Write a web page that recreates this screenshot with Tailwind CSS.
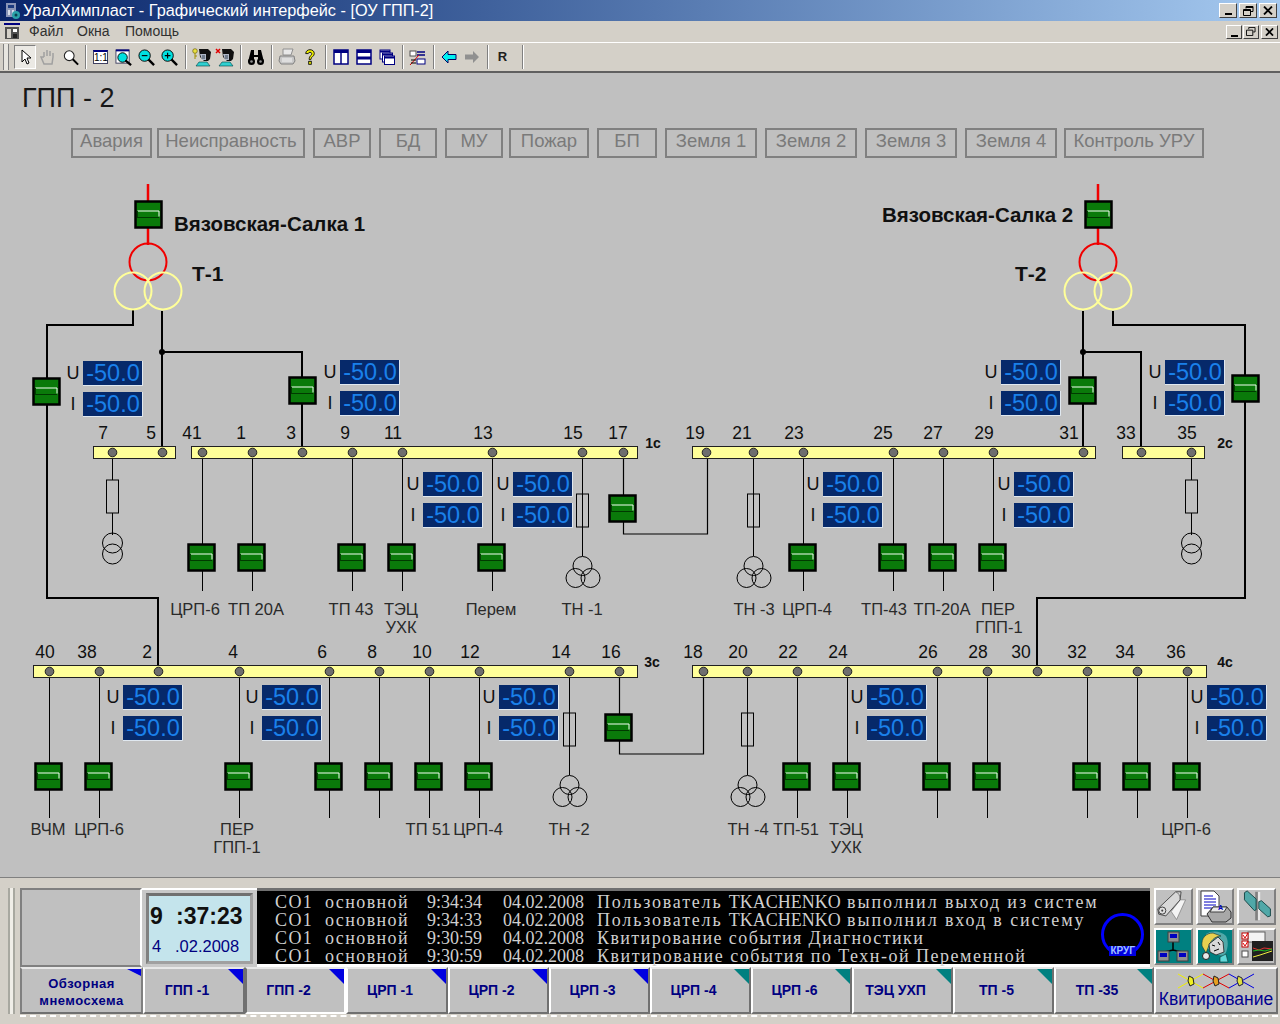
<!DOCTYPE html>
<html lang="ru">
<head>
<meta charset="UTF-8">
<title>ОУ ГПП-2</title>
<script src="https://cdn.jsdelivr.net/npm/@tailwindcss/browser@4"></script>
</head>
<body class="bg-[#d4d0c8]">
<div class="w-[1280px] h-[1024px] flex flex-col overflow-hidden bg-[#d4d0c8] font-['Liberation_Sans',sans-serif]">

  <!-- title bar -->
  <div class="h-[21px] flex items-center bg-linear-to-r from-[#0a246a] to-[#a6caf0] pl-[3px] pr-[3px]">
    <svg class="w-[18px] h-[18px] mr-[2px]" viewBox="0 0 18 18"><rect x="3" y="1" width="10" height="14" fill="#8a94b8"/><rect x="5" y="3" width="6" height="3" fill="#1c3a80"/><rect x="5" y="8" width="2" height="5" fill="#d8dcea"/><rect x="9" y="8" width="2" height="5" fill="#d8dcea"/><circle cx="13" cy="13" r="4" fill="#2aa0a8"/><circle cx="13" cy="13" r="1.5" fill="#0a4050"/></svg>
    <span class="text-white text-[16.3px] leading-none">УралХимпласт - Графический интерфейс - [ОУ ГПП-2]</span>
    <div class="ml-auto flex">
      <div class="w-[18px] h-[15px] bg-[#d4d0c8] border border-t-white border-l-white border-r-[#404040] border-b-[#404040] flex items-end justify-center pb-[2px]"><div class="w-[7px] h-[2px] bg-black"></div></div>
      <div class="w-[18px] h-[15px] ml-[2px] bg-[#d4d0c8] border border-t-white border-l-white border-r-[#404040] border-b-[#404040] flex items-center justify-center"><svg class="w-[11px] h-[10px]" viewBox="0 0 11 10" fill="none" stroke="#000"><path d="M3 2.5V.5h7v5H8"/><path d="M3 1.5h7"/><path d="M.5 3.5h7v6h-7z"/><path d="M.5 4.5h7"/></svg></div>
      <div class="w-[18px] h-[15px] ml-[2px] bg-[#d4d0c8] border border-t-white border-l-white border-r-[#404040] border-b-[#404040] flex items-center justify-center"><svg class="w-[10px] h-[9px]" viewBox="0 0 10 9" stroke="#000" stroke-width="1.8"><path d="M1 .5l8 8M9 .5l-8 8"/></svg></div>
    </div>
  </div>

  <!-- menu -->
  <div class="h-[22px] flex items-center border-b border-b-white relative pl-[4px] pr-[2px]">
    <svg class="w-[17px] h-[17px] mr-[8px]" viewBox="0 0 17 17"><rect x="0" y="0" width="16" height="2" fill="#000080"/><rect x="1" y="4" width="14" height="12" fill="#505050"/><rect x="3" y="6" width="4" height="9" fill="#d4d0c8"/><rect x="9" y="6" width="4" height="3" fill="#fff"/><rect x="9" y="11" width="4" height="4" fill="#202020"/></svg>
    <span class="text-[14px] text-[#303030] w-[48px]">Файл</span>
    <span class="text-[14px] text-[#303030] w-[48px]">Окна</span>
    <span class="text-[14px] text-[#303030]">Помощь</span>
    <div class="ml-auto flex">
      <div class="w-[16px] h-[14px] bg-[#d4d0c8] border border-t-white border-l-white border-r-[#404040] border-b-[#404040] flex items-end justify-center pb-[1px]"><div class="w-[7px] h-[2px] bg-black"></div></div>
      <div class="w-[16px] h-[14px] ml-[1px] bg-[#d4d0c8] border border-t-white border-l-white border-r-[#404040] border-b-[#404040] flex items-center justify-center"><svg class="w-[10px] h-[9px]" viewBox="0 0 11 10" fill="none" stroke="#000"><path d="M3 2.5V.5h7v5H8"/><path d="M.5 3.5h7v6h-7z"/></svg></div>
      <div class="w-[17px] h-[14px] ml-[2px] bg-[#d4d0c8] border border-t-white border-l-white border-r-[#404040] border-b-[#404040] flex items-center justify-center"><svg class="w-[9px] h-[8px]" viewBox="0 0 10 9" stroke="#000" stroke-width="2"><path d="M1 .5l8 8M9 .5l-8 8"/></svg></div>
    </div>
  </div>

  <!-- toolbar -->
  <div class="h-[30px] flex items-center pl-[3px] border-b-2 border-b-[#606060]">
    <div class="w-[6px] h-[26px] border-x border-x-[#808080] bg-[#e8e6e0] mr-[5px]"></div>
    <div class="w-[22px] h-[24px] flex items-center justify-center border border-t-[#808080] border-l-[#808080] border-r-white border-b-white bg-[#ebe9e4]"><svg class="w-[16px] h-[16px]" viewBox="0 0 16 16"><path d="M5 1v12l3-3 2 5 2-1-2-5h4z" fill="#fff" stroke="#000"/></svg></div>
    <div class="w-[23px] flex justify-center"><svg class="w-[18px] h-[18px]" viewBox="0 0 18 18"><path d="M5 9V4M8 8V2M11 8V3M14 9V5M5 9l-3 0 3 7h8l1-7" fill="#d4d0c8" stroke="#a0a0a0" stroke-width="1.5"/></svg></div>
    <div class="w-[23px] flex justify-center"><svg class="w-[16px] h-[17px]" viewBox="0 0 18 18"><circle cx="7" cy="7" r="5.5" fill="#fff" stroke="#202020" stroke-width="1.2"/><path d="M11 11l6 6" stroke="#000" stroke-width="2.2"/></svg></div>
    <div class="w-px h-[24px] bg-[#808080] border-r border-r-white ml-[3px] mr-[2px] box-content"></div>
    <div class="w-[23px] flex justify-center"><div class="w-[15px] h-[14px] border border-[#404060] border-t-2 border-t-[#000080] bg-white text-[10px] leading-[11px] text-center text-black">1:1</div></div>
    <div class="w-[23px] flex justify-center"><svg class="w-[17px] h-[17px]" viewBox="0 0 18 18"><rect x="1" y="1" width="14" height="14" fill="#fff" stroke="#404060"/><path d="M1 1.5h14" stroke="#000080" stroke-width="2"/><circle cx="8" cy="9" r="5" fill="#00e0e0" stroke="#000"/><path d="M11 12l6 5" stroke="#000" stroke-width="2.5"/></svg></div>
    <div class="w-[23px] flex justify-center"><svg class="w-[17px] h-[17px]" viewBox="0 0 18 18"><circle cx="7" cy="7" r="6" fill="#00e0e0" stroke="#000"/><path d="M4 7h6" stroke="#000" stroke-width="1.2"/><path d="M11 11l6 6" stroke="#000" stroke-width="2.5"/></svg></div>
    <div class="w-[23px] flex justify-center"><svg class="w-[17px] h-[17px]" viewBox="0 0 18 18"><circle cx="7" cy="7" r="6" fill="#00e0e0" stroke="#000"/><path d="M4 7h6M7 4v6" stroke="#000" stroke-width="1.2"/><path d="M11 11l6 6" stroke="#000" stroke-width="2.5"/></svg></div>
    <div class="w-px h-[24px] bg-[#808080] border-r border-r-white ml-[4px] mr-[3px] box-content"></div>
    <div class="w-[23px] flex justify-center"><svg class="w-[20px] h-[20px]" viewBox="0 0 20 20"><circle cx="3" cy="4" r="2.300" fill="#e8e040" stroke="#605000" stroke-width=".6"/><path d="M3 6v6M3 9h2" stroke="#a09000"/><path d="M7 2h9l3 3-1 7-2 2h-4l-4-4z" fill="#101010"/><path d="M8 7h6v6H10z" fill="#b0b8c8"/><path d="M10 9h3M10 11h3" stroke="#304050"/><path d="M4 19l3-4h8l3 4z" fill="#30d0d0" stroke="#004040" stroke-width=".6"/></svg></div>
    <div class="w-[23px] flex justify-center"><svg class="w-[20px] h-[20px]" viewBox="0 0 20 20"><path d="M1 2l4 4M5 2l-4 4" stroke="#e00000" stroke-width="1.5"/><path d="M7 2h9l3 3-1 7-2 2h-4l-4-4z" fill="#101010"/><path d="M8 7h6v6H10z" fill="#b0b8c8"/><path d="M10 9h3M10 11h3" stroke="#304050"/><path d="M4 19l3-4h8l3 4z" fill="#30d0d0" stroke="#004040" stroke-width=".6"/></svg></div>
    <div class="w-px h-[24px] bg-[#808080] border-r border-r-white ml-[4px] mr-[2px] box-content"></div>
    <div class="w-[23px] flex justify-center"><svg class="w-[18px] h-[16px]" viewBox="0 0 18 16"><path d="M4 1h3v5h4V1h3l3 12h-6V8H7v5H1z" fill="#000"/><circle cx="4.500" cy="12.500" r="3.500" fill="#000"/><circle cx="13.500" cy="12.500" r="3.500" fill="#000"/><circle cx="4.500" cy="12.500" r="1.300" fill="#909090"/><circle cx="13.500" cy="12.500" r="1.300" fill="#909090"/></svg></div>
    <div class="w-px h-[24px] bg-[#808080] border-r border-r-white ml-[4px] mr-[2px] box-content"></div>
    <div class="w-[23px] flex justify-center"><svg class="w-[18px] h-[18px]" viewBox="0 0 18 18"><path d="M5 1h10l-2 6H5z" fill="#e8e8e8" stroke="#909090"/><path d="M2 8h14l1 5-2 3H3l-2-3z" fill="#c8c8c8" stroke="#808080"/><path d="M4 11h10M4 13h10" stroke="#f4f4f4"/></svg></div>
    <div class="w-[23px] flex justify-center"><svg class="w-[12px] h-[18px]" viewBox="0 0 14 20"><path d="M2 6c0-6 10-6 10 0 0 4-4 3-4 7H6c0-5 3-4 3-7 0-2-4-2-4 0z" fill="#f0f000" stroke="#000"/><rect x="5.500" y="15" width="3" height="3.500" fill="#f0f000" stroke="#000"/></svg></div>
    <div class="w-px h-[24px] bg-[#808080] border-r border-r-white ml-[4px] mr-[2px] box-content"></div>
    <div class="w-[23px] flex justify-center"><svg class="w-[16px] h-[16px]" viewBox="0 0 16 16"><rect x="1" y="1" width="14" height="14" fill="#fff" stroke="#000080" stroke-width="1.500"/><path d="M1 2.500h14" stroke="#000080" stroke-width="3"/><path d="M8 1v14" stroke="#000080" stroke-width="1.500"/></svg></div>
    <div class="w-[23px] flex justify-center"><svg class="w-[16px] h-[16px]" viewBox="0 0 16 16"><rect x="1" y="1" width="14" height="14" fill="#fff" stroke="#000080" stroke-width="1.500"/><path d="M1 2.500h14M1 9h14" stroke="#000080" stroke-width="3"/></svg></div>
    <div class="w-[23px] flex justify-center"><svg class="w-[16px] h-[16px]" viewBox="0 0 16 16"><rect x="1" y="1" width="10" height="9" fill="#fff" stroke="#000080"/><path d="M1 2.500h10" stroke="#000080" stroke-width="2"/><rect x="3.500" y="4" width="10" height="9" fill="#fff" stroke="#000080"/><path d="M3.500 5.500h10" stroke="#000080" stroke-width="2"/><rect x="5.500" y="7" width="10" height="8.500" fill="#fff" stroke="#000080"/><path d="M5.500 8.500h10" stroke="#000080" stroke-width="2"/></svg></div>
    <div class="w-px h-[24px] bg-[#808080] border-r border-r-white ml-[4px] mr-[2px] box-content"></div>
    <div class="w-[23px] flex justify-center"><svg class="w-[17px] h-[17px]" viewBox="0 0 17 17"><rect x="1" y="2" width="6" height="5" fill="#fff" stroke="#505050"/><path d="M8 3h8M8 6h8" stroke="#000080" stroke-width="1.500"/><path d="M1 16l9-10" stroke="#e00000"/><rect x="8" y="10" width="8" height="5" fill="#fff" stroke="#000080"/><path d="M2 11h5M2 14h5" stroke="#000"/></svg></div>
    <div class="w-px h-[24px] bg-[#808080] border-r border-r-white ml-[4px] mr-[2px] box-content"></div>
    <div class="w-[23px] flex justify-center"><svg class="w-[16px] h-[14px]" viewBox="0 0 16 14"><path d="M7 1L1 7l6 6V9.500h8v-5H7z" fill="#00f0f0" stroke="#000060"/></svg></div>
    <div class="w-[23px] flex justify-center"><svg class="w-[16px] h-[14px]" viewBox="0 0 16 14"><path d="M9 1l6 6-6 6V9.500H1v-5h8z" fill="#909090"/></svg></div>
    <div class="w-px h-[24px] bg-[#808080] border-r border-r-white ml-[4px] mr-[2px] box-content"></div>
    <div class="w-[23px] text-center text-[13px] font-bold text-[#202020]">R</div>
    <div class="w-px h-[24px] bg-[#808080] border-r border-r-white ml-[8px] box-content"></div>
  </div>

  <!-- mimic diagram -->
  <div class="h-[805px] relative bg-[#c0c0c0] border-b border-b-[#808080]">
    <div class="pl-[22px] pt-[9px] h-[55px] text-[27px] leading-[32px] text-[#181818]">ГПП - 2</div>
    <div class="flex pl-[71px] text-[18.5px] text-[#7a7a7a] leading-[22px] text-center">
      <div class="w-[81px] h-[30px] border-2 border-[#808080] mr-[5px]">Авария</div>
      <div class="w-[148px] h-[30px] border-2 border-[#808080] mr-[8px]">Неисправность</div>
      <div class="w-[58px] h-[30px] border-2 border-[#808080] mr-[8px]">АВР</div>
      <div class="w-[58px] h-[30px] border-2 border-[#808080] mr-[8px]">БД</div>
      <div class="w-[58px] h-[30px] border-2 border-[#808080] mr-[6px]">МУ</div>
      <div class="w-[80px] h-[30px] border-2 border-[#808080] mr-[8px]">Пожар</div>
      <div class="w-[60px] h-[30px] border-2 border-[#808080] mr-[8px]">БП</div>
      <div class="w-[92px] h-[30px] border-2 border-[#808080] mr-[8px]">Земля 1</div>
      <div class="w-[92px] h-[30px] border-2 border-[#808080] mr-[8px]">Земля 2</div>
      <div class="w-[92px] h-[30px] border-2 border-[#808080] mr-[8px]">Земля 3</div>
      <div class="w-[92px] h-[30px] border-2 border-[#808080] mr-[7px]">Земля 4</div>
      <div class="w-[140px] h-[30px] border-2 border-[#808080]">Контроль УРУ</div>
    </div>
    <svg id="scheme" class="absolute left-0 top-0 w-[1280px] h-[805px]" viewBox="0 73 1280 805"></svg>
  </div>

  <!-- bottom panel -->
  <div class="flex-1 flex pl-[8px] pt-[10px]">
    <div class="w-[7px] h-[126px] border-x-2 border-x-[#a8a8a0] bg-[#f0eee8] mr-[5px]"></div>
    <div class="w-[1258px]">
      <div class="flex h-[79px]">
        <div class="w-[122px] bg-[#c0c0c0] border-2 border-t-[#808080] border-l-[#808080] border-r-white border-b-[#808080]"></div>
        <div class="w-[115px] bg-[#c8c8c8] border-t-2 border-t-white p-[3px] pl-[4px] pr-[4px]">
          <div class="w-full h-full bg-[#c4e4ec] border-[3px] border-t-[#707070] border-l-[#808080] border-r-[#a0a0a0] border-b-[#a0a0a0]">
            <div class="flex items-baseline text-[23px] font-bold text-[#101010] h-[39px] leading-[40px] pl-[1px]"><span class="w-[26px]">9</span><span>:37:23</span></div>
            <div class="flex items-baseline text-[16.5px] text-[#000080] leading-[22px] pl-[3px]"><span class="w-[23px]">4</span><span>.02.2008</span></div>
          </div>
        </div>
        <div class="w-[893px] relative bg-black border-t-[3px] border-t-[#707070] border-b-[3px] border-b-white pt-[2px] font-['Liberation_Serif',serif] text-[18px] leading-[18px] text-[#cfcfcf]">
          <div class="flex pl-[18px] whitespace-pre"><span class="w-[50px] shrink-0 tracking-[1.4px]">СО1</span><span class="w-[102px] shrink-0 tracking-[1.4px]">основной</span><span class="w-[76px] shrink-0">9:34:34</span><span class="w-[94px] shrink-0">04.02.2008</span><span class="tracking-[1.8px]">Пользователь </span><span>TKACHENKO</span><span class="tracking-[1.9px]"> выполнил выход из систем</span></div>
          <div class="flex pl-[18px] whitespace-pre"><span class="w-[50px] shrink-0 tracking-[1.4px]">СО1</span><span class="w-[102px] shrink-0 tracking-[1.4px]">основной</span><span class="w-[76px] shrink-0">9:34:33</span><span class="w-[94px] shrink-0">04.02.2008</span><span class="tracking-[1.8px]">Пользователь </span><span>TKACHENKO</span><span class="tracking-[1.9px]"> выполнил вход в систему</span></div>
          <div class="flex pl-[18px] whitespace-pre"><span class="w-[50px] shrink-0 tracking-[1.4px]">СО1</span><span class="w-[102px] shrink-0 tracking-[1.4px]">основной</span><span class="w-[76px] shrink-0">9:30:59</span><span class="w-[94px] shrink-0">04.02.2008</span><span class="tracking-[1.4px]">Квитирование события Диагностики</span></div>
          <div class="flex pl-[18px] whitespace-pre"><span class="w-[50px] shrink-0 tracking-[1.4px]">СО1</span><span class="w-[102px] shrink-0 tracking-[1.4px]">основной</span><span class="w-[76px] shrink-0">9:30:59</span><span class="w-[94px] shrink-0">04.02.2008</span><span class="tracking-[1.5px]">Квитирование события по Техн-ой Переменной</span></div>
          <div class="absolute right-[6px] bottom-[8px] w-[43px] h-[43px] rounded-full border-[3px] border-[#0000ff]"></div>
          <div class="absolute right-[14px] bottom-[8px] bg-[#0000e0] text-[#a0c0ff] font-['Liberation_Sans',sans-serif] font-bold text-[10px] leading-[10px] px-[1px]">КРУГ</div>
        </div>
        <div class="flex-1 grid grid-cols-3 grid-rows-2 gap-[3px] pl-[4px] pr-[2px] pb-[2px]">
          <div class="bg-[#c0c0c0] border-2 border-t-white border-l-white border-r-[#808080] border-b-[#808080] flex items-center justify-center"><svg class="w-[34px] h-[34px]" viewBox="0 0 38 38"><path d="M27 11h6L23 33l-6-9z" fill="#f4f4f4" stroke="#606060" stroke-width=".6"/><path d="M2 21L22 2h6l-1 9-16 18-8-2z" fill="#d8d8d8" stroke="#404040"/><path d="M22 2c3 1 5 4 5 9" fill="none" stroke="#707070"/><circle cx="7" cy="23" r="4" fill="#e0e0e0" stroke="#303030"/><circle cx="7" cy="23" r="1.200" fill="#404040"/></svg></div>
          <div class="bg-[#c0c0c0] border-2 border-t-white border-l-white border-r-[#808080] border-b-[#808080] flex items-center justify-center"><svg class="w-[34px] h-[34px]" viewBox="0 0 34 34"><path d="M3 1h13l5 5v20H3z" fill="#fff" stroke="#404040"/><path d="M6 6h9M6 9h12M6 12h12M6 15h12M6 18h8" stroke="#0000c0"/><path d="M9 24l6-7h14l4 5v6l-5 4H14z" fill="#a8a8a8" stroke="#303030"/><path d="M15 17h14l-3 5H12z" fill="#e8e8e8" stroke="#404040"/><text x="20" y="20" font-size="7" font-weight="700" fill="#0000c0">A</text></svg></div>
          <div class="bg-[#c0c0c0] border-2 border-t-white border-l-white border-r-[#808080] border-b-[#808080] flex items-center justify-center"><svg class="w-[34px] h-[34px]" viewBox="0 0 38 38"><rect x="17" y="2" width="6" height="32" fill="#808080"/><rect x="20" y="2" width="3" height="32" fill="#e8e8e8"/><path d="M5 3l3-2 10 9v12l-2 1L5 11z" fill="#50a8a8" stroke="#104040"/><path d="M21 13l3-1 10 9v8l-3 1-10-9z" fill="#50a8a8" stroke="#104040"/></svg></div>
          <div class="bg-[#008080] border-2 border-t-white border-l-white border-r-[#808080] border-b-[#808080] flex items-center justify-center"><svg class="w-[34px] h-[34px]" viewBox="0 0 34 34"><path d="M17 12v8M8 22l9-2 9 2" stroke="#000" stroke-width="1.500" fill="none"/><rect x="12" y="2" width="11" height="10" fill="#909090" stroke="#404040"/><rect x="14" y="4" width="7" height="4" fill="#0000c0"/><rect x="2" y="21" width="11" height="10" fill="#909090" stroke="#404040"/><rect x="4" y="23" width="7" height="4" fill="#0000c0"/><rect x="21" y="21" width="11" height="10" fill="#909090" stroke="#404040"/><rect x="23" y="23" width="7" height="4" fill="#0000c0"/></svg></div>
          <div class="bg-[#008080] border-2 border-t-white border-l-white border-r-[#808080] border-b-[#808080] flex items-center justify-center"><svg class="w-[34px] h-[34px]" viewBox="0 0 34 34"><path d="M8 4c6-4 15-3 20 2 3 6 2 14-2 20l-6-1L9 18z" fill="#50a8a8"/><path d="M4 16C3 8 8 3 15 3l8 3c-6 0-11 5-13 12l-2 5z" fill="#e8d050" stroke="#103030" stroke-width=".6"/><path d="M11 14l9-7 5 5 1 10-8 3-6-3z" fill="#d8d8d8" stroke="#202020" stroke-width=".8"/><path d="M14 15l3 1M20 12l2 3M16 21l5-2" stroke="#000"/><circle cx="8" cy="26" r="3.500" fill="#e8e8e8" stroke="#202020"/><path d="M22 27l6-3 2 8h-8z" fill="#60d8d8" stroke="#103030" stroke-width=".6"/></svg></div>
          <div class="bg-[#c0c0c0] border-2 border-t-white border-l-white border-r-[#808080] border-b-[#808080] flex items-center justify-center"><svg class="w-[34px] h-[34px]" viewBox="0 0 34 34"><rect x="8" y="2" width="17" height="10" fill="#f4f4f4" stroke="#606060"/><rect x="2" y="3" width="6" height="6" fill="#fff" stroke="#c00000"/><rect x="2" y="11" width="6" height="6" fill="#fff" stroke="#c00000"/><rect x="2" y="21" width="6" height="6" fill="#fff" stroke="#505050"/><path d="M3 5l2 3 3-5M3 13l2 3 3-5" stroke="#e00000" fill="none"/><rect x="12" y="11" width="21" height="20" fill="#202020"/><path d="M13 18l6 2 5-2 8 1" stroke="#e03030" fill="none"/><path d="M13 21l6-1 6 1 7-2" stroke="#20c020" fill="none"/><path d="M13 27l7-2 12-4" stroke="#f0f040" fill="none"/></svg></div>
        </div>
      </div>
      <div class="flex h-[47px] border-b-0 text-[14px] font-bold text-[#000080]">
        <div class="w-[123px] relative bg-[#c0c0c0] border-2 border-t-[#e8e8e8] border-l-[#808080] border-r-[#808080] border-b-[#707070] flex flex-col items-center justify-center text-[13px] leading-[17px] tracking-[0.5px] pt-[3px]"><span>Обзорная</span><span>мнемосхема</span><div class="absolute top-0 right-0 w-[14px] h-[7px] bg-[#0000e0] [clip-path:polygon(0_0,100%_0,100%_100%)]"></div></div>
        <div class="w-[102px] pr-[14px] relative bg-[#c0c0c0] border-2 border-t-[#e8e8e8] border-l-white border-r-[#707070] border-b-[#707070] flex items-center justify-center"><span>ГПП -1</span><div class="absolute top-0 right-0 w-[15px] h-[15px] bg-[#0000e0] [clip-path:polygon(0_0,100%_0,100%_100%)]"></div></div>
        <div class="w-[101px] pr-[14px] relative bg-[#c0c0c0] border-2 border-t-[#e8e8e8] border-l-[#707070] border-r-white border-b-white flex items-center justify-center"><span>ГПП -2</span><div class="absolute top-0 right-0 w-[15px] h-[15px] bg-[#0000e0] [clip-path:polygon(0_0,100%_0,100%_100%)]"></div></div>
        <div class="w-[102px] pr-[14px] relative bg-[#c0c0c0] border-2 border-t-[#e8e8e8] border-l-white border-r-[#707070] border-b-[#707070] flex items-center justify-center"><span>ЦРП -1</span><div class="absolute top-0 right-0 w-[15px] h-[15px] bg-[#0000e0] [clip-path:polygon(0_0,100%_0,100%_100%)]"></div></div>
        <div class="w-[101px] pr-[14px] relative bg-[#c0c0c0] border-2 border-t-[#e8e8e8] border-l-white border-r-[#707070] border-b-[#707070] flex items-center justify-center"><span>ЦРП -2</span><div class="absolute top-0 right-0 w-[15px] h-[15px] bg-[#0000e0] [clip-path:polygon(0_0,100%_0,100%_100%)]"></div></div>
        <div class="w-[101px] pr-[14px] relative bg-[#c0c0c0] border-2 border-t-[#e8e8e8] border-l-white border-r-[#707070] border-b-[#707070] flex items-center justify-center"><span>ЦРП -3</span><div class="absolute top-0 right-0 w-[15px] h-[15px] bg-[#0000e0] [clip-path:polygon(0_0,100%_0,100%_100%)]"></div></div>
        <div class="w-[101px] pr-[14px] relative bg-[#c0c0c0] border-2 border-t-[#e8e8e8] border-l-white border-r-[#707070] border-b-[#707070] flex items-center justify-center"><span>ЦРП -4</span><div class="absolute top-0 right-0 w-[15px] h-[15px] bg-[#008080] [clip-path:polygon(0_0,100%_0,100%_100%)]"></div></div>
        <div class="w-[101px] pr-[14px] relative bg-[#c0c0c0] border-2 border-t-[#e8e8e8] border-l-white border-r-[#707070] border-b-[#707070] flex items-center justify-center"><span>ЦРП -6</span><div class="absolute top-0 right-0 w-[15px] h-[15px] bg-[#008080] [clip-path:polygon(0_0,100%_0,100%_100%)]"></div></div>
        <div class="w-[101px] pr-[14px] relative bg-[#c0c0c0] border-2 border-t-[#e8e8e8] border-l-white border-r-[#707070] border-b-[#707070] flex items-center justify-center"><span>ТЭЦ УХП</span><div class="absolute top-0 right-0 w-[15px] h-[15px] bg-[#008080] [clip-path:polygon(0_0,100%_0,100%_100%)]"></div></div>
        <div class="w-[101px] pr-[14px] relative bg-[#c0c0c0] border-2 border-t-[#e8e8e8] border-l-white border-r-[#707070] border-b-[#707070] flex items-center justify-center"><span>ТП -5</span><div class="absolute top-0 right-0 w-[15px] h-[15px] bg-[#008080] [clip-path:polygon(0_0,100%_0,100%_100%)]"></div></div>
        <div class="w-[100px] pr-[14px] relative bg-[#c0c0c0] border-2 border-t-[#e8e8e8] border-l-white border-r-[#707070] border-b-[#707070] flex items-center justify-center"><span>ТП -35</span><div class="absolute top-0 right-0 w-[15px] h-[15px] bg-[#008080] [clip-path:polygon(0_0,100%_0,100%_100%)]"></div></div>
        <div class="w-[124px] bg-[#c0c0c0] border-2 border-t-white border-l-white border-r-[#707070] border-b-[#707070] flex flex-col items-center pt-[4px]">
          <svg class="w-[78px] h-[16px]" viewBox="0 0 78 16" fill="none"><path d="M1 1l25 14M1 15l25-14" stroke="#f0f000"/><path d="M26 1l26 14M26 15l26-14" stroke="#e00000"/><path d="M52 1l25 14M52 15l25-14" stroke="#0000e0"/><path d="M12 3l4 2 1 6-4 2-2-5z" fill="#f0f020" stroke="#202020"/><path d="M37 3l4 2 1 6-4 2-2-5z" fill="#e8a020" stroke="#202020"/><path d="M61 3l4 2 1 6-4 2-2-5z" fill="#e0e040" stroke="#202040"/></svg>
          <span class="text-[17.5px] font-normal leading-[20px] text-[#000090]">Квитирование</span>
        </div>
      </div>
      <div class="mt-[1px] border-b-2 border-dashed border-b-white"></div>
    </div>
  </div>
</div>

<script>
    // scheme data, page coordinates
    const G = [];
    const line = (d, w, c) => G.push(`<path d="${d}" fill="none" stroke="${c || '#000'}" stroke-width="${w}"/>`);
    const text = (x, y, s, size, anchor, fill, bold) => G.push(`<text x="${x}" y="${y}" font-size="${size}" text-anchor="${anchor}" fill="${fill}"${bold ? ' font-weight="700"' : ''}>${s}</text>`);

    function breaker(x, y) {
        G.push(`<rect x="${x - 12.500}" y="${y - 12.500}" width="26" height="26" fill="#0a7a0a" stroke="#000" stroke-width="2.500"/>`);
        line(`M${x - 11} ${y + 3.500}H${x + 11}`, 1, '#003a00');
        line(`M${x - 10.500} ${y - 3}H${x + 11}V${y + 2.500}`, 1, '#f4fff4');
        line(`M${x - 10.500} ${y - 3}V${y + 3.500}`, 1, '#004000');
    }
    function bus(x1, x2, y) {
        G.push(`<rect x="${x1 + .5}" y="${y + .5}" width="${x2 - x1}" height="12" fill="#ffff99" stroke="#202020"/>`);
    }
    function dot(x, y) {
        G.push(`<circle cx="${x}" cy="${y}" r="4.300" fill="#6e6e6e" stroke="#202020"/>`);
    }
    // fill is "none" where the feeder line shows through the fuse
    function fuse(x, y, fill) {
        G.push(`<rect x="${x - 6}" y="${y}" width="12" height="33" fill="${fill}" stroke="#000"/>`);
    }
    function circle(x, y, r, c, w) {
        G.push(`<circle cx="${x}" cy="${y}" r="${r}" fill="none" stroke="${c}" stroke-width="${w}"/>`);
    }
    function meter(x, y) {
        [y, y + 31].forEach((top, i) => {
            G.push(`<rect x="${x}" y="${top}" width="59" height="24" fill="#06296a"/>`);
            line(`M${x} ${top + 24.500}H${x + 59.500}V${top}`, 1, '#e0e8f0');
            text(x + 30, top + 20, '-50.0', 23.500, 'middle', '#1a80ea');
            text(x - 10, top + 18, i ? 'I' : 'U', 18, 'middle', '#101010');
        });
    }
    function tn(x, y) {
        line(`M${x} ${y - 100}V${y}`, 1);
        circle(x, y + 10, 9.500, '#000', 1);
        circle(x - 7, y + 22, 9.500, '#000', 1);
        circle(x + 8, y + 22, 9.500, '#000', 1);
    }
    function smallTr(x, y) {
        circle(x, y, 10, '#000', 1);
        circle(x, y + 11, 10, '#000', 1);
    }

    // thick feeders
    line('M148 184V245', 2.500, '#f00000');
    line('M1098 184V245', 2.500, '#f00000');
    line('M133 310V325H47V598H158V665', 2);
    line('M162 311V446M162 352H302V446', 2);
    line('M1083 311V446M1083 352H1141V446', 2);
    line('M1113 311V325H1245V598H1037V665', 2);

    // drop lines from the busbars
    [[112.500, 452, 535], [1191.500, 452, 535]].forEach(l => line(`M${l[0]} ${l[1]}V${l[2]}`, 1));
    [202.500, 252.500, 352.500, 402.500, 492.500, 803.500, 893.500, 943.500, 993.500].forEach(x => line(`M${x} 452V591`, 1));
    [49.500, 99.500, 239.500, 329.500, 379.500, 429.500, 479.500, 797.500, 847.500, 937.500, 987.500, 1087.500, 1137.500, 1187.500].forEach(x => line(`M${x} 671V818`, 1));
    line('M623.500 452V534H707.500V452', 1.200);
    line('M619.500 671V754H703.500V671', 1.200);
    tn(582.500, 556); tn(753.500, 556); tn(569.500, 775); tn(747.500, 775);

    // busbars
    bus(93, 175, 446); bus(191, 637, 446); bus(692, 1095, 446); bus(1122, 1204, 446);
    bus(33, 637, 665); bus(692, 1206, 665);
    [112, 162, 202, 252, 302, 352, 402, 492, 582, 623, 706, 753, 803, 893, 943, 993, 1083, 1141, 1191].forEach(x => dot(x + .5, 452.500));
    [49, 99, 158, 239, 329, 379, 429, 479, 569, 619, 703, 747, 797, 847, 937, 987, 1037, 1087, 1137, 1187].forEach(x => dot(x + .5, 671.500));
    G.push('<circle cx="162" cy="352" r="3" fill="#000"/><circle cx="1083" cy="352" r="3" fill="#000"/>');

    // fuses and measuring transformers
    fuse(112.500, 480, '#c0c0c0'); fuse(1191.500, 480, '#c0c0c0');
    fuse(582.500, 494, 'none'); fuse(753.500, 494, 'none'); fuse(569.500, 713, 'none'); fuse(747.500, 713, 'none');
    smallTr(112.500, 543); smallTr(1191.500, 543);

    // power transformers
    circle(148, 262, 18.500, '#f00000', 2);
    circle(1098, 262, 18.500, '#f00000', 2);
    [133, 163, 1083, 1113].forEach(x => circle(x, 291, 18.500, '#ffff99', 2));

    // breakers
    [[148, 214], [1098, 214], [46, 391], [302, 390], [1082, 390], [1245, 388], [622, 508], [618, 727]].forEach(b => breaker(b[0], b[1]));
    [201, 251, 351, 401, 491, 802, 892, 942, 992].forEach(x => breaker(x, 557));
    [48, 98, 238, 328, 378, 428, 478, 796, 846, 936, 986, 1086, 1136, 1186].forEach(x => breaker(x, 776));

    // measurements
    [[83, 361], [340, 360], [1001, 360], [1165, 360], [423, 472], [513, 472], [823, 472], [1014, 472], [123, 685], [262, 685], [499, 685], [867, 685], [1207, 685]].forEach(m => meter(m[0], m[1]));

    // feeder numbers
    [[103, '7'], [151, '5'], [192, '41'], [241, '1'], [291, '3'], [345, '9'], [393, '11'], [483, '13'], [573, '15'], [618, '17'], [695, '19'], [742, '21'], [794, '23'], [883, '25'], [933, '27'], [984, '29'], [1069, '31'], [1126, '33'], [1187, '35']].forEach(n => text(n[0], 439, n[1], 17.500, 'middle', '#101010'));
    [[45, '40'], [87, '38'], [147, '2'], [233, '4'], [322, '6'], [372, '8'], [422, '10'], [470, '12'], [561, '14'], [611, '16'], [693, '18'], [738, '20'], [788, '22'], [838, '24'], [928, '26'], [978, '28'], [1021, '30'], [1077, '32'], [1125, '34'], [1176, '36']].forEach(n => text(n[0], 658, n[1], 17.500, 'middle', '#101010'));
    text(653, 448, '1с', 14, 'middle', '#101010', true);
    text(1225, 448, '2с', 14, 'middle', '#101010', true);
    text(652, 667, '3с', 14, 'middle', '#101010', true);
    text(1225, 667, '4с', 14, 'middle', '#101010', true);

    // feeder captions
    [[195, 'ЦРП-6'], [256, 'ТП 20А'], [351, 'ТП 43'], [401, 'ТЭЦ'], [491, 'Перем'], [582, 'ТН -1'], [754, 'ТН -3'], [807, 'ЦРП-4'], [884, 'ТП-43'], [942, 'ТП-20А'], [998, 'ПЕР']].forEach(c => text(c[0], 615, c[1], 16.500, 'middle', '#2a2a2a'));
    [[401, 'УХК'], [999, 'ГПП-1']].forEach(c => text(c[0], 633, c[1], 16.500, 'middle', '#2a2a2a'));
    [[48, 'ВЧМ'], [99, 'ЦРП-6'], [237, 'ПЕР'], [428, 'ТП 51'], [478, 'ЦРП-4'], [569, 'ТН -2'], [748, 'ТН -4'], [796, 'ТП-51'], [846, 'ТЭЦ'], [1186, 'ЦРП-6']].forEach(c => text(c[0], 835, c[1], 16.500, 'middle', '#2a2a2a'));
    [[237, 'ГПП-1'], [846, 'УХК']].forEach(c => text(c[0], 853, c[1], 16.500, 'middle', '#2a2a2a'));

    // feeder names
    text(174, 231, 'Вязовская-Салка 1', 20.500, 'start', '#101010', true);
    text(882, 222, 'Вязовская-Салка 2', 20.500, 'start', '#101010', true);
    text(192, 281, 'Т-1', 21, 'start', '#101010', true);
    text(1015, 281, 'Т-2', 21, 'start', '#101010', true);

    document.getElementById('scheme').innerHTML = G.join('');
</script>
</body>
</html>
